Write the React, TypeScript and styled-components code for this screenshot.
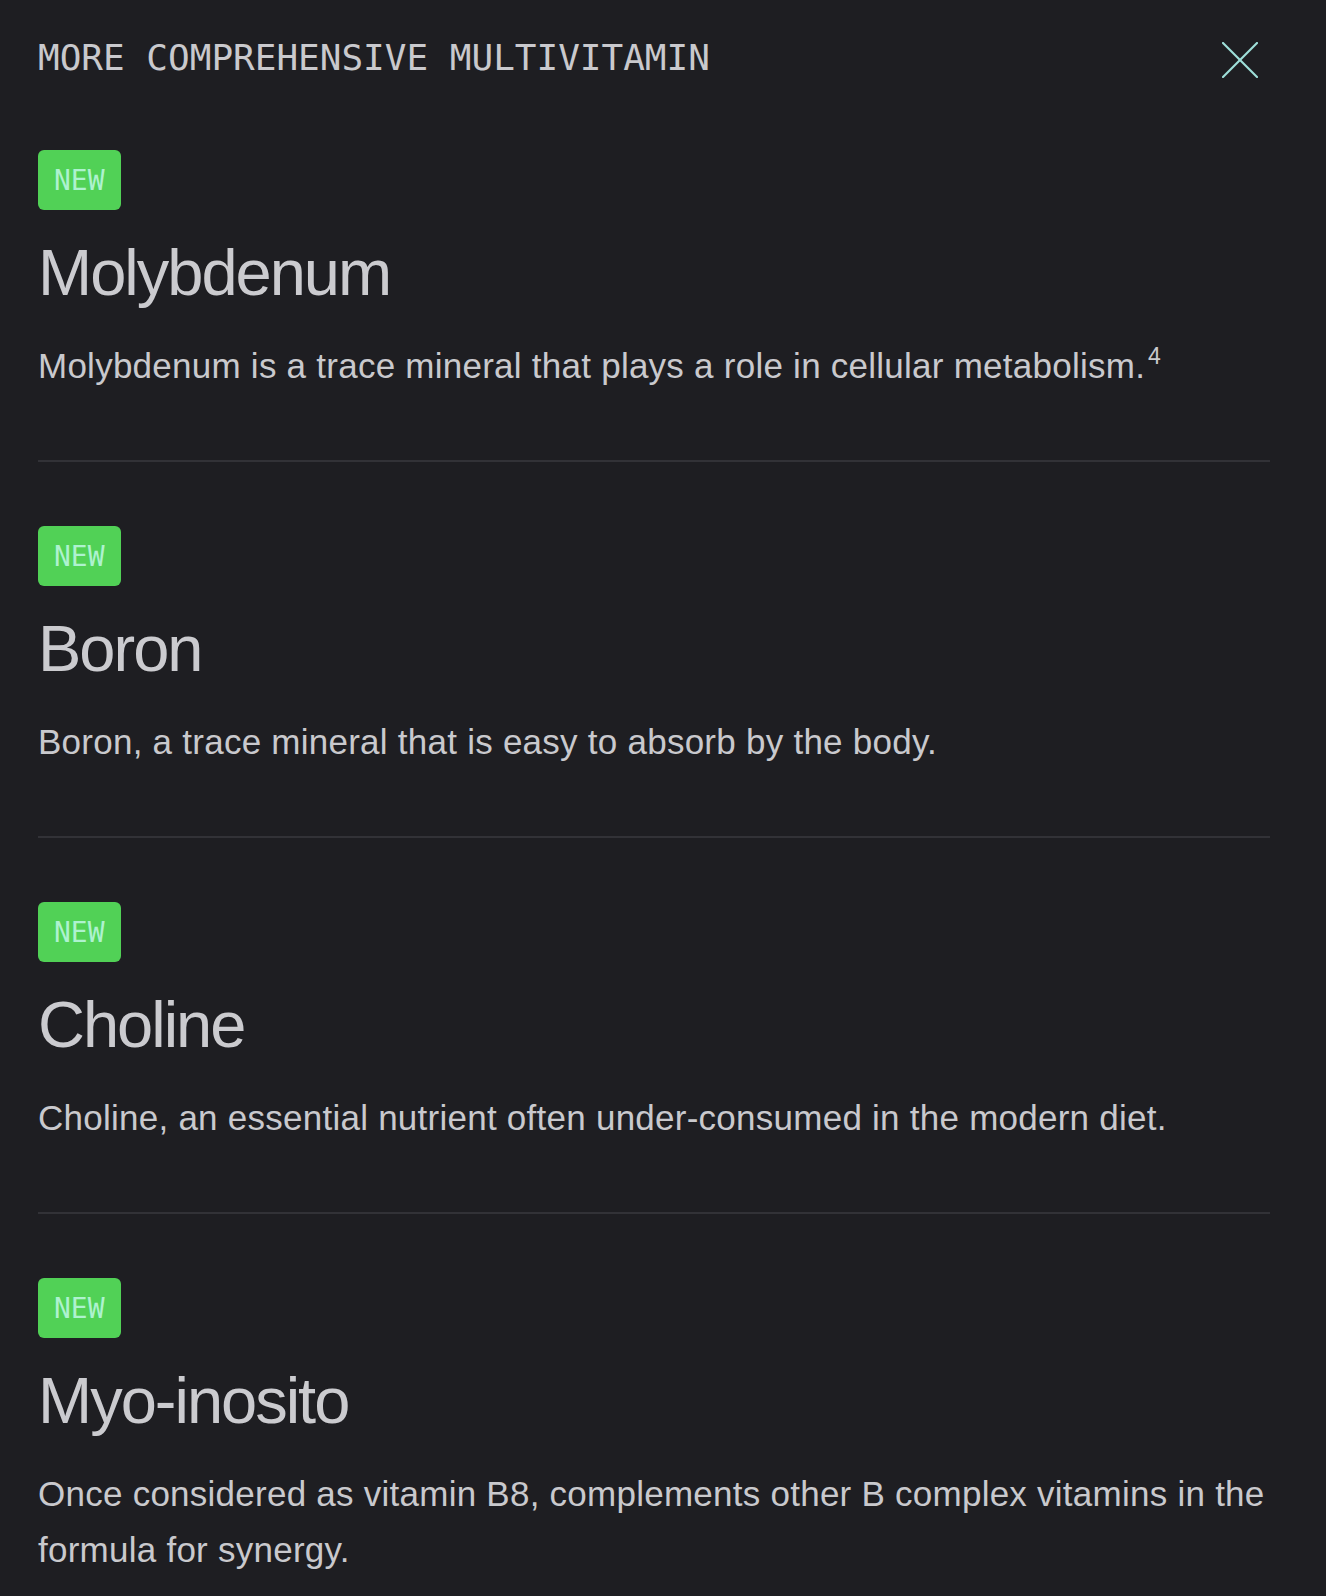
import styled, { createGlobalStyle } from "styled-components";

const GlobalStyle = createGlobalStyle`
  body {
    margin: 0;
    background: #1e1e22;
    color: #c9c9cd;
    font-family: "Liberation Sans", Arial, sans-serif;
  }
`

const Panel = styled.div`
  padding: 0 56px 0 38px;
`

const Header = styled.header`
  display: flex;
  justify-content: space-between;
  align-items: center;
  padding: 36px 0 6px;
`

const Heading = styled.h2`
  margin: 0;
  font-family: "DejaVu Sans Mono", "Liberation Mono", monospace;
  font-weight: normal;
  font-size: 36px;
  line-height: 44px;
  color: #c9c9cd;
`

const CloseButton = styled.button`
  display: flex;
  align-items: center;
  justify-content: center;
  width: 60px;
  height: 44px;
  box-sizing: border-box;
  padding: 4px 0 0;
  border: none;
  background: none;
  color: #9fe0da;
  cursor: pointer;
`

const Section = styled.section`
  padding: 64px 0 66px;

  & + & {
    border-top: 2px solid #323237;
  }
`

const Badge = styled.span`
  display: inline-flex;
  align-items: center;
  justify-content: center;
  height: 60px;
  padding: 0 16px;
  box-sizing: border-box;
  border-radius: 6px;
  background: #51d156;
  color: #aef2cf;
  font-family: "DejaVu Sans Mono", "Liberation Mono", monospace;
  font-size: 28px;
`

const Title = styled.h3`
  margin: 24px 0 0;
  font-weight: normal;
  font-size: 65px;
  line-height: 78px;
  letter-spacing: -2px;
  color: #cbcbcf;
`

const Description = styled.p`
  margin: 26px 0 0;
  font-size: 35px;
  line-height: 56px;
  letter-spacing: 0.25px;
  color: #c9c9cd;
`

const Sup = styled.sup`
  font-size: 23px;
  line-height: 0;
  vertical-align: 14px;
  margin-left: 3px;
`

type Nutrient = {
  name: string
  text: string
  note?: string
}

const nutrients: Nutrient[] = [
  { name: "Molybdenum", text: "Molybdenum is a trace mineral that plays a role in cellular metabolism.", note: "4" },
  { name: "Boron", text: "Boron, a trace mineral that is easy to absorb by the body." },
  { name: "Choline", text: "Choline, an essential nutrient often under-consumed in the modern diet." },
  { name: "Myo-inosito", text: "Once considered as vitamin B8, complements other B complex vitamins in the formula for synergy." },
]

const App = () => {
  return (
    <>
      <GlobalStyle />
      <Panel>
        <Header>
          <Heading>MORE COMPREHENSIVE MULTIVITAMIN</Heading>
          <CloseButton aria-label="Close">
            <svg width="36" height="36" viewBox="0 0 36 36" fill="none" stroke="currentColor" strokeWidth="2.2" strokeLinecap="round">
              <line x1="1" y1="1" x2="35" y2="35" />
              <line x1="35" y1="1" x2="1" y2="35" />
            </svg>
          </CloseButton>
        </Header>
        {nutrients.map((item) => (
          <Section key={item.name}>
            <Badge>NEW</Badge>
            <Title>{item.name}</Title>
            <Description>
              {item.text}
              {item.note && <Sup>{item.note}</Sup>}
            </Description>
          </Section>
        ))}
      </Panel>
    </>
  );
}

export default App;
